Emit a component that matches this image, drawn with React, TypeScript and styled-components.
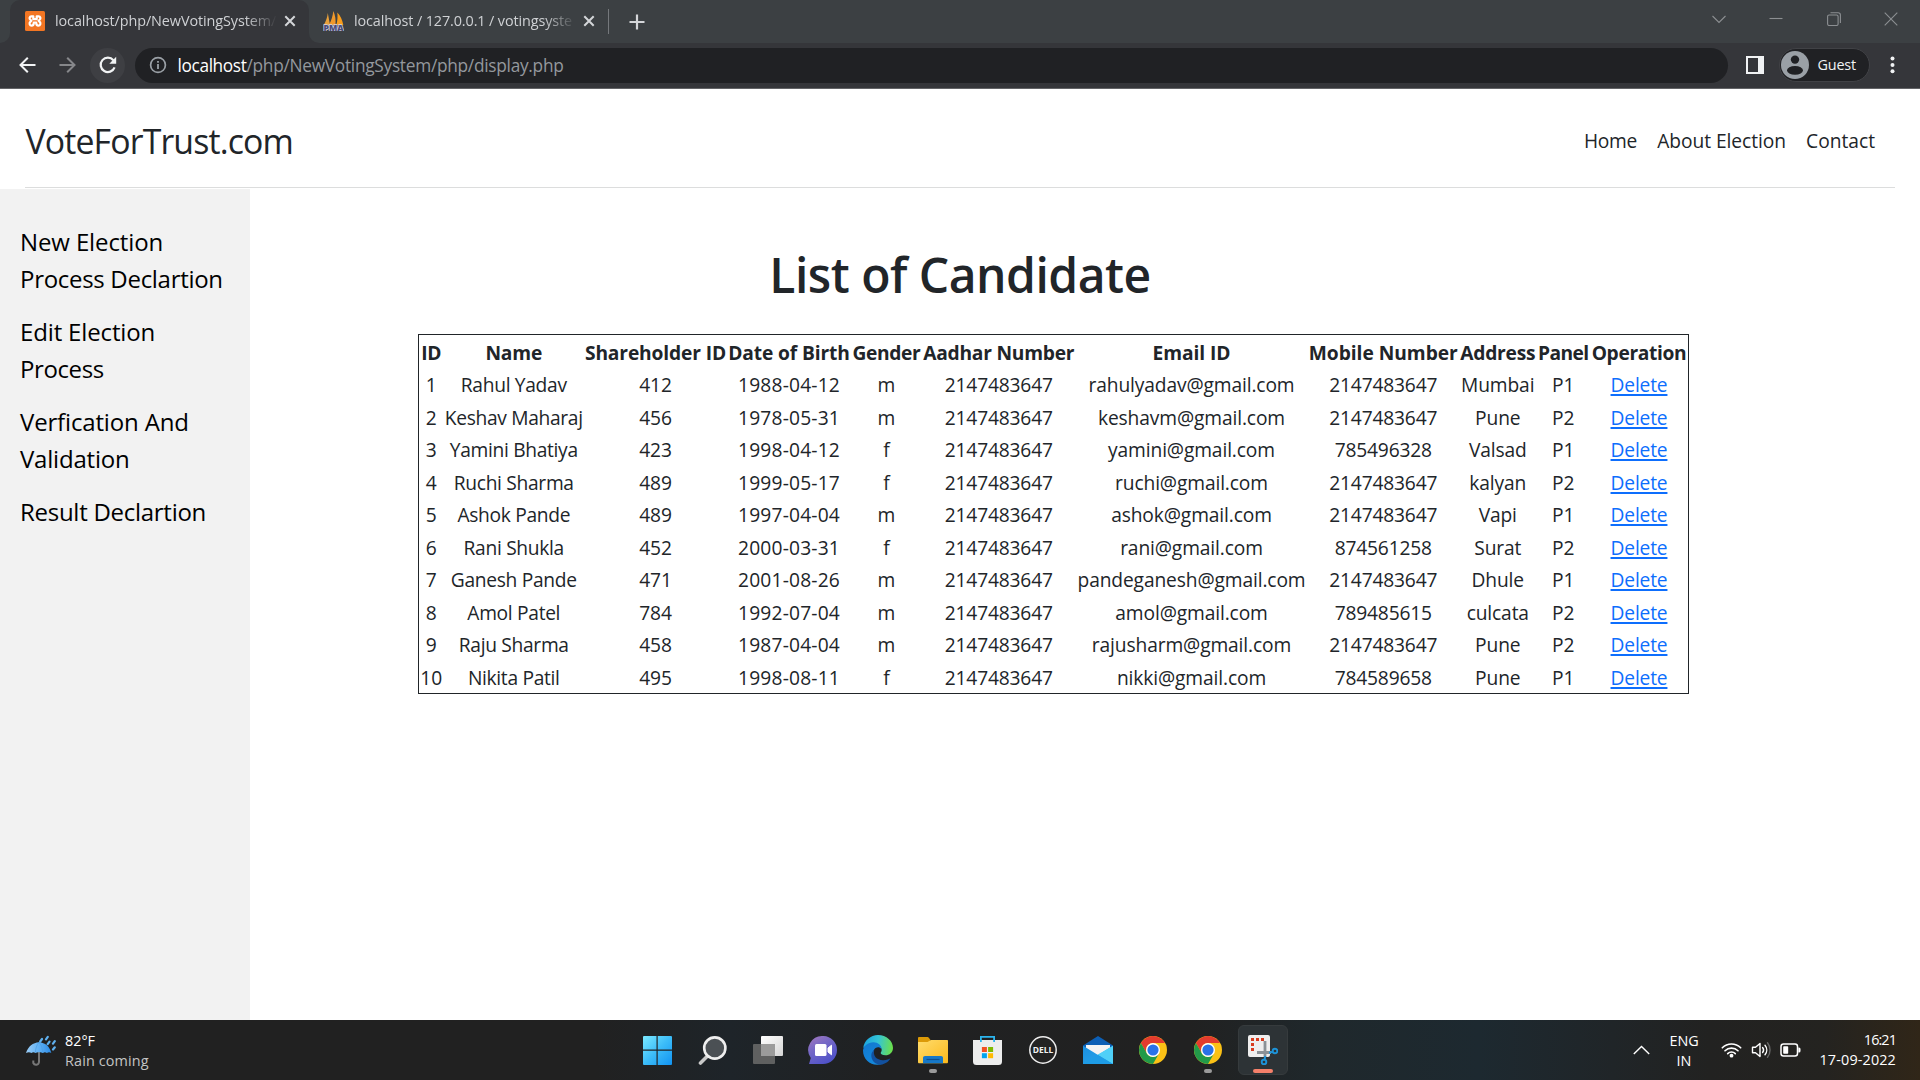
import React from 'react';
import styled, { createGlobalStyle } from 'styled-components';

const GlobalStyle = createGlobalStyle`
  * { box-sizing: border-box; }
  html, body { margin: 0; padding: 0; }
  body {
    font-family: "Open Sans", "Noto Sans", sans-serif;
    background: #fff;
    color: #212529;
    overflow: hidden;
  }
  svg { display: block; flex: none; }
`;

const Screen = styled.div`
  width: 1920px;
  height: 1080px;
  display: flex;
  flex-direction: column;
`;

/* ---------- browser chrome ---------- */

const TabStrip = styled.div`
  height: 43px;
  flex: none;
  display: flex;
  background: linear-gradient(90deg, #35363a 0 20px, #3c4043 20px);
`;

const StripEdge = styled.div`
  width: 10px;
  background: #3c4043;
  border-bottom-right-radius: 10px;
`;

const Tab = styled.div<{ $active?: boolean }>`
  width: ${p => (p.$active ? 299 : 298)}px;
  display: flex;
  align-items: center;
  padding: 0 12px 1px ${p => (p.$active ? 15 : 14)}px;
  background: ${p => (p.$active ? '#35363a' : '#3c4043')};
  border-radius: ${p => (p.$active ? '10px 10px 0 0' : '0 0 0 10px')};
`;

const TabSlot = styled.div`
  display: flex;
  background: #35363a;
`;

const ActiveSlot = styled.div`
  display: flex;
  background: #3c4043;
`;

const TabTitle = styled.div<{ $ls: number }>`
  width: 225px;
  flex: none;
  margin-left: 10px;
  font-size: 14.4px;
  line-height: 20px;
  letter-spacing: ${p => p.$ls}px;
  white-space: nowrap;
  color: #cfd1d4;
  mask-image: linear-gradient(90deg, #000 190px, transparent 222px);
`;

const TabClose = styled.div`
  margin-left: 4px;
  color: #d4d6d9;
`;

const NewTab = styled.div`
  display: flex;
  align-items: center;
  gap: 19.5px;
  padding-left: 1px;
`;

const TabDivider = styled.div`
  width: 1px;
  height: 25px;
  background: #75787c;
`;

const WindowControls = styled.div`
  margin-left: auto;
  margin-right: 22px;
  display: flex;
  align-items: center;
  gap: 43.3px;
  padding-bottom: 6px;
  color: #8c8f92;
`;

const Toolbar = styled.div`
  height: 46px;
  flex: none;
  display: flex;
  align-items: center;
  padding: 0 17px 1px 10px;
  background: #35363a;
  border-bottom: 1px solid #636467;
`;

const NavButton = styled.div<{ $filled?: boolean; $dim?: boolean }>`
  width: 35px;
  height: 35px;
  margin-right: 5px;
  border-radius: 50%;
  display: flex;
  align-items: center;
  justify-content: center;
  background: ${p => (p.$filled ? '#3e3f43' : 'transparent')};
  color: ${p => (p.$dim ? '#86878a' : '#f1f3f4')};
`;

const AddressBar = styled.div`
  width: 1593px;
  height: 35px;
  margin-left: 5px;
  border-radius: 18px;
  background: #202124;
  display: flex;
  align-items: center;
  padding-left: 13.5px;
  font-size: 17.28px;
  line-height: 35px;
  white-space: nowrap;
  color: #9aa0a6;
`;

const Host = styled.span`
  margin-left: 11px;
  color: #fff;
  letter-spacing: -0.37px;
`;

const UrlPath = styled.span`
  color: #94989d;
  letter-spacing: -0.27px;
`;

const PanelButton = styled.div`
  width: 18px;
  height: 18px;
  margin-left: 18px;
  border: 2px solid #f1f3f4;
  border-right-width: 6px;
`;

const Profile = styled.div`
  width: 91px;
  height: 34px;
  margin-left: 14.5px;
  border-radius: 17px;
  border: 1px solid #414246;
  background: #202124;
  display: flex;
  align-items: center;
  gap: 9px;
  padding-left: 1px;
  font-size: 14.4px;
  letter-spacing: -0.17px;
  color: #f1f3f4;
`;

const ProfileName = styled.span`
  line-height: 20px;
  padding-bottom: 1px;
`;

const Menu = styled.div`
  margin-left: auto;
  padding-right: 8px;
`;

/* ---------- page ---------- */

const PageHeader = styled.header`
  height: 99px;
  flex: none;
  margin: 0 25px 1px;
  padding: 5px 20px 0 0;
  border-bottom: 1px solid #dcdddd;
  display: flex;
  align-items: center;
  justify-content: space-between;
`;

const Brand = styled.div`
  padding-left: 0.5px;
  font-size: 33.8px;
  line-height: 44px;
  letter-spacing: -0.85px;
`;

const NavLinks = styled.nav`
  display: flex;
  gap: 20px;
  font-size: 19.2px;
  line-height: 30px;
`;

const NavLink = styled.a<{ $ls: number }>`
  letter-spacing: ${p => p.$ls}px;
`;

const Body = styled.div`
  flex: 1;
  min-height: 0;
  display: flex;
`;

const Sidebar = styled.aside`
  width: 250px;
  flex: none;
  background: #f2f2f2;
  padding: 34px 20px;
  display: flex;
  flex-direction: column;
  gap: 16px;
`;

const SideLink = styled.a`
  font-size: 24px;
  line-height: 37px;
  color: #000;
`;

const SideLine = styled.span<{ $ls: number }>`
  display: block;
  white-space: nowrap;
  letter-spacing: ${p => p.$ls}px;
`;

const Main = styled.main`
  flex: 1;
  padding: 56px 231px 0 168px;
`;

const Heading = styled.h1`
  margin: 0 0 29px;
  padding-right: 187px;
  text-align: center;
  font-size: 48px;
  line-height: 60px;
  font-weight: 600;
  letter-spacing: -0.5px;
`;

const Table = styled.table`
  display: block;
  width: 1271px;
  border: 1px solid #212529;
`;

const Section = styled.tbody`
  display: block;
`;

const HeadSection = styled.thead`
  display: block;
`;

const HeadCell = styled.th<{ $ls: number }>`
  padding: 2px 0 0;
  font-weight: 700;
  letter-spacing: ${p => p.$ls}px;
`;

const Cell = styled.td<{ $ls: number }>`
  padding: 1.4px 0 0;
  letter-spacing: ${p => p.$ls}px;
`;

const Row = styled.tr`
  display: grid;
  grid-template-columns: 24.5px 140.5px 143px 124px 71px 153.5px 232px 151.5px 77.5px 53.5px 98px;
  height: 32.5px;
  align-items: center;
  justify-items: center;
  font-size: 19.2px;
  line-height: 32.5px;
  white-space: nowrap;

  &:nth-child(even) ${Cell} {
    padding-top: 2px;
  }
`;

const DeleteLink = styled.a`
  color: #0d6efd;
  text-decoration: underline;
  text-decoration-thickness: 2px;
  text-underline-offset: 2px;
`;

/* ---------- taskbar ---------- */

const Taskbar = styled.footer`
  height: 60px;
  flex: none;
  display: flex;
  align-items: center;
  color: #fff;
  font-size: 14.4px;
  line-height: 20px;
  background: linear-gradient(90deg, #212121 0, #212121 31%, #1e2429 38%, #202122 46%, #212121 62%, #1f282c 69%, #1d2930 77%, #202528 84%, #222221 89%, #242320 95%, #302618 100%);
`;

const Weather = styled.div`
  width: 630px;
  padding-left: 25px;
  display: flex;
  align-items: center;
  gap: 9px;
`;

const Stack = styled.div<{ $align?: string }>`
  display: flex;
  flex-direction: column;
  padding-top: 1.5px;
  align-items: ${p => p.$align || 'flex-start'};
`;

const Line = styled.span<{ $ls?: number; $muted?: boolean }>`
  letter-spacing: ${p => p.$ls || 0}px;
  color: ${p => (p.$muted ? '#c4c4c4' : '#fff')};
`;

const Apps = styled.div`
  display: flex;
`;

const AppSlot = styled.div`
  width: 55px;
  display: flex;
  justify-content: center;
`;

const AppTile = styled.div<{ $active?: boolean }>`
  width: 50px;
  height: 50px;
  padding-top: 9px;
  border-radius: 6px;
  display: flex;
  flex-direction: column;
  align-items: center;
  gap: 4px;
  background: ${p => (p.$active ? '#2d3336' : 'transparent')};
  border: 1px solid ${p => (p.$active ? '#363b3d' : 'transparent')};
`;

const Indicator = styled.div<{ $active?: boolean }>`
  width: ${p => (p.$active ? 20 : 8)}px;
  height: 4px;
  border-radius: 2px;
  background: ${p => (p.$active ? '#f5806a' : '#9a9a9a')};
`;

const Tray = styled.div`
  margin-left: auto;
  padding-right: 24px;
  display: flex;
  align-items: center;
`;

const Language = styled.div`
  width: 30px;
  margin: 0 22px 0 18px;
`;

const Status = styled.div`
  display: flex;
  gap: 8.5px;
  align-items: center;
  margin-right: 18px;
`;

const Clock = styled.div`
  width: 77px;
  padding-bottom: 2px;
`;

/* ---------- icons ---------- */

const XamppIcon = () => (
  <svg width="20" height="20" viewBox="0 0 20 20">
    <rect width="20" height="20" rx="1.500" fill="#f37623" />
    <path d="M8.300 8.200V5.400H6.400C4.500 5.400 4 7.600 5.300 8.700l1.200 1.100-1.200 1.100c-1.500 1.500-.5 3.800 1.300 3.800 1.600 0 2.200-1.200 2.200-3.200h2.400c0 2 .6 3.200 2.200 3.200 1.800 0 2.800-2.300 1.300-3.800l-1.200-1.100 1.200-1.100c1.300-1.100.8-3.300-1.100-3.300h-1.900v2.800Z" fill="none" stroke="#fff" strokeWidth="2.200" strokeLinejoin="round" />
  </svg>
);

const PmaIcon = () => (
  <svg width="21" height="20" viewBox="0 0 21 20">
    <path d="M4.800 2 7 14H.8C3 10 4.400 6 4.800 2Z" fill="#e9a13b" />
    <path d="M10.300 0c2.200 4.500 2.500 9 2.200 14H6C8.500 9.500 9.800 4.800 10.300 0Z" fill="#f0982b" />
    <path d="M14.300 1.500c3.200 3 5 7.500 6 12.500h-7c1.200-4 1.500-8.500 1-12.500Z" fill="#f89c1c" />
    <text x="10.500" y="19.600" textAnchor="middle" textLength="20" lengthAdjust="spacingAndGlyphs" fontFamily="Open Sans, sans-serif" fontWeight="800" fontSize="8.500" fill="#4b4c78" stroke="#d5d6e4" strokeWidth="1.400" paintOrder="stroke">PMA</text>
  </svg>
);

const CloseIcon = () => (
  <svg width="12" height="12" viewBox="0 0 12 12">
    <path d="M1.300 1.300l9.400 9.400M10.700 1.300l-9.400 9.400" stroke="currentColor" strokeWidth="2" />
  </svg>
);

const PlusIcon = () => (
  <svg width="16" height="16" viewBox="0 0 16 16">
    <path d="M8 .5v15M.5 8h15" stroke="#d4d6d9" strokeWidth="2.200" />
  </svg>
);

const BackIcon = ({ flip }: { flip?: boolean }) => (
  <svg width="18" height="18" viewBox="0 0 18 18">
    <path transform={flip ? 'matrix(-1 0 0 1 17 0)' : undefined} d="M16.500 9H1.700M8.800 1.700 1.500 9l7.300 7.300" fill="none" stroke="currentColor" strokeWidth="2" />
  </svg>
);

const ReloadIcon = () => (
  <svg width="18" height="18" viewBox="0 0 18 18">
    <path d="M15.600 11.400A7.200 7.200 0 1 1 14.400 4.200" fill="none" stroke="currentColor" strokeWidth="2.200" />
    <path d="M17.200.8v6.900h-6.900Z" fill="currentColor" />
  </svg>
);

const InfoIcon = () => (
  <svg width="18" height="18" viewBox="0 0 18 18">
    <circle cx="9" cy="9" r="7.400" fill="none" stroke="#9aa0a6" strokeWidth="1.700" />
    <path d="M9 8v5M9 4.900v1.900" stroke="#9aa0a6" strokeWidth="1.800" />
  </svg>
);

const AvatarIcon = () => (
  <svg width="28" height="28" viewBox="0 0 28 28">
    <circle cx="14" cy="14" r="14" fill="#9aa0a6" />
    <circle cx="14" cy="8.600" r="4.200" fill="#202124" />
    <ellipse cx="14" cy="19.300" rx="8" ry="4.400" fill="#202124" />
  </svg>
);

const DotsIcon = () => (
  <svg width="5" height="18" viewBox="0 0 5 18">
    {[2.5, 9, 15.3].map(y => <circle key={y} cx="2.500" cy={y} r="2" fill="#f1f3f4" />)}
  </svg>
);

const WindowIcon = ({ d }: { d: string }) => (
  <svg width="14" height="14" viewBox="0 0 14 14">
    <path d={d} fill="none" stroke="currentColor" strokeWidth="1.100" />
  </svg>
);

const UmbrellaIcon = () => (
  <svg width="31" height="31" viewBox="0 0 31 31">
    <defs>
      <linearGradient id="umb" x1="0" x2="1">
        <stop offset="0" stopColor="#9ccdf5" />
        <stop offset=".5" stopColor="#62b2f5" />
        <stop offset="1" stopColor="#2b8be6" />
      </linearGradient>
    </defs>
    <path d="M14 15v12a3 3 0 0 1-5.700 1v-2.500" fill="none" stroke="#777" strokeWidth="2" />
    <path d="M1 18C3 11.500 8 7.500 14 7.200c6 .3 11 4.300 12.300 10.800-1.500-.9-3-.9-4.400 0-1.300-.9-2.700-.9-4.100 0-1.300-.9-6-.9-7.300 0-1.300-.9-2.800-.9-4.100 0-1.700-.9-3.300-.9-5.400 0Z" fill="url(#umb)" />
    <path d="M14 7.200c-2.500 3-3.500 6.500-3.600 10.600M14 7.200c2.500 3 3.500 6.500 3.800 10.600" fill="none" stroke="#4c9fe4" strokeWidth=".7" />
    <path d="m17 4-1.800 2.500M22.800 1.800 21 4.300M24.500 6.600l-1.800 2.500M29.800 6.200 28 8.700M29.800 12.300 28 14.500" stroke="#5fb0ee" strokeWidth="2.200" strokeLinecap="round" />
  </svg>
);

const WindowsIcon = () => (
  <svg width="30" height="30" viewBox="1.500 0.500 30 30">
    <defs>
      <linearGradient id="win" x1="0" y1="0" x2="1" y2="1">
        <stop offset="0" stopColor="#7be9ff" />
        <stop offset=".5" stopColor="#3cbcf8" />
        <stop offset="1" stopColor="#1193f2" />
      </linearGradient>
    </defs>
    <path d="M2.500 1.500h12.500V15H1.500V2.500a1 1 0 0 1 1-1ZM16.200 1.500h13.300a1 1 0 0 1 1 1V15H16.200ZM1.500 16.200H15v14.300H2.500a1 1 0 0 1-1-1ZM16.200 16.200h14.300v13.300a1 1 0 0 1-1 1H16.200Z" fill="url(#win)" />
  </svg>
);

const SearchIcon = () => (
  <svg width="30" height="30" viewBox="0 0 30 30">
    <path d="m9 21.500-6.500 6.500" stroke="#c9c9c9" strokeWidth="3.600" strokeLinecap="round" />
    <circle cx="16.800" cy="13" r="10.600" fill="#4b5054" stroke="#efefef" strokeWidth="2.600" />
  </svg>
);

const TaskViewIcon = () => (
  <svg width="30" height="30" viewBox="0 0 30 30">
    <defs>
      <linearGradient id="tv" x1="0" y1="0" x2="1" y2="1">
        <stop offset="0" stopColor="#fff" />
        <stop offset="1" stopColor="#d5d5d5" />
      </linearGradient>
    </defs>
    <rect x="8" y="1" width="22" height="20" rx="1" fill="url(#tv)" />
    <rect x="0" y="9" width="22" height="20" rx="1" fill="#5f6060" />
    <path d="M8 9h14v12H8Z" fill="#9b9b9b" />
  </svg>
);

const ChatIcon = () => (
  <svg width="30" height="30" viewBox="0 0 30 30">
    <defs>
      <linearGradient id="chat" x1="0" y1="0" x2=".6" y2="1">
        <stop offset="0" stopColor="#a578bd" />
        <stop offset=".45" stopColor="#7568c6" />
        <stop offset="1" stopColor="#4f52c9" />
      </linearGradient>
    </defs>
    <path d="M15.500 1A14 14 0 0 1 29 15a14 14 0 0 1-14 14H1l1.800-6A14 14 0 0 1 15.500 1Z" fill="url(#chat)" />
    <rect x="7" y="9" width="11.500" height="12" rx="1.500" fill="#fff" />
    <path d="m20 13 3.500-2.800v9.600L20 17Z" fill="#fff" stroke="#fff" strokeLinejoin="round" />
  </svg>
);

const EdgeIcon = () => (
  <svg width="30" height="30" viewBox="0 0 30 30">
    <defs>
      <linearGradient id="e1" x1="0" y1=".3" x2="1" y2=".4">
        <stop offset="0" stopColor="#1aa3e0" />
        <stop offset=".5" stopColor="#35c4d5" />
        <stop offset="1" stopColor="#6be04b" />
      </linearGradient>
      <linearGradient id="e2" x1="0" y1="0" x2=".5" y2="1">
        <stop offset="0" stopColor="#1278cf" />
        <stop offset="1" stopColor="#1488dc" />
      </linearGradient>
    </defs>
    <path d="M.2 13C1.200 5.500 7.500 0 15 0c8.500 0 15 6 15 13 0 4.500-3.500 7.300-7.500 7.300-3.300 0-4.800-1-4.800-2.200 0-.8 1-1.300 1-3.300 0-3-3-5.800-7.200-5.800C6.500 9 2.300 11 .2 13Z" fill="url(#e1)" />
    <path d="M0 15.500C.3 11 5 7.200 10.500 7.200c4.500 0 8 3 8.200 7.300-1-1.800-2.400-2.300-3.700-2.300-2.800 0-4.800 2.800-4.800 6.300 0 6 4.800 9.800 9.300 10.200C10 32.300 0 26 0 15.500Z" fill="url(#e2)" />
    <path d="M11.300 14.800c-2 6 2.700 10.700 9.200 10.400 3 0 5.500-1 6.900-1.900-.7 2.200-4.900 6-9.900 6.500C12 29.500 8 25 8.300 20c.2-2.200 1.500-4.200 3-5.200Z" fill="#12519f" />
  </svg>
);

const FolderIcon = () => (
  <svg width="30" height="30" viewBox="0 0 30 30">
    <defs>
      <linearGradient id="fold" x1="0" y1="0" x2="1" y2="1">
        <stop offset="0" stopColor="#ffdc6c" />
        <stop offset="1" stopColor="#fbb91c" />
      </linearGradient>
    </defs>
    <path d="M0 3.200C0 2.400.5 2 1.200 2H9c1 0 1.500.3 2 1l1.500 2V9H0Z" fill="#dc9a07" />
    <path d="M0 7h9.500L13 5h16c.6 0 1 .4 1 1v21c0 .8-.5 1.300-1.300 1.300H1.300C.5 28.300 0 27.800 0 27Z" fill="url(#fold)" />
    <path d="M5 28.300V23c0-1.300.8-2 2-2h16c1.200 0 2 .7 2 2v5.300Z" fill="#1678c8" />
    <path d="M8.500 24.500h13" stroke="#0b4f92" strokeWidth="1.200" />
  </svg>
);

const StoreIcon = () => (
  <svg width="30" height="30" viewBox="0.500 0 30 30">
    <path d="M.5 5h29v21.500A3.500 3.500 0 0 1 26 30H4a3.500 3.500 0 0 1-3.500-3.500Z" fill="#ededed" />
    <path d="M8.400 7V1.800h13.200V7" fill="none" stroke="#2bb5ee" strokeWidth="1.800" />
    <path d="M9.400 12h5v5h-5Z" fill="#f25022" />
    <path d="M15.600 12h5v5h-5Z" fill="#7fba00" />
    <path d="M9.400 18.200h5v5h-5Z" fill="#00a4ef" />
    <path d="M15.600 18.200h5v5h-5Z" fill="#ffb900" />
  </svg>
);

const DellIcon = () => (
  <svg width="30" height="30" viewBox="0 0 30 30">
    <circle cx="15" cy="15" r="13.200" fill="#232323" stroke="#ededed" strokeWidth="1.500" />
    <text x="15" y="18.300" textAnchor="middle" textLength="20.500" lengthAdjust="spacingAndGlyphs" fontFamily="Open Sans, sans-serif" fontWeight="700" fontSize="9" fill="#f2f2f2">DELL</text>
  </svg>
);

const MailIcon = () => (
  <svg width="30" height="30" viewBox="0 0 30 30">
    <defs>
      <linearGradient id="mail" x1="0" y1="0" x2="1" y2="1">
        <stop offset="0" stopColor="#1b8fe0" />
        <stop offset="1" stopColor="#28a8ec" />
      </linearGradient>
    </defs>
    <path d="M0 10.500 15 1l15 9.500V16H0Z" fill="#0c5fb5" />
    <path d="M3 10h24v6L15 22 3 16Z" fill="#f3f3f3" />
    <path d="M0 10.800 15 20 30 10.800V29H0Z" fill="url(#mail)" />
    <path d="M30 10.800V29L14.500 19.700Z" fill="#4fd0f8" />
    <path d="M0 29 14.500 19.700 30 29Z" fill="#1e9ce6" />
  </svg>
);

const ChromeIcon = () => (
  <svg width="30" height="30" viewBox="0 0 30 30">
    <circle cx="15" cy="15" r="14" fill="#fbc116" />
    <path d="M2.880 8A14 14 0 0 1 27.120 8H15a7 7 0 0 0-6.060 10.500Z" fill="#e33b2e" />
    <path d="M2.880 8A14 14 0 0 0 15 29l6.060-10.500A7 7 0 0 1 8.940 18.500Z" fill="#229a49" />
    <circle cx="15" cy="15" r="7" fill="#fff" />
    <circle cx="15" cy="15" r="5.600" fill="#2a72e8" />
  </svg>
);

const SnipIcon = () => (
  <svg width="30" height="30" viewBox="0 0 30 30">
    <rect x="0" y="0" width="22" height="22" rx="2" fill="#eeeeee" />
    <path d="M4.500 16V4.500H16" fill="none" stroke="#d83b1e" strokeWidth="3" strokeDasharray="3 2" />
    <path d="M17 6v16M9 17.500h14" stroke="#8b9196" strokeWidth="2.800" />
    <circle cx="27" cy="16" r="2.300" fill="none" stroke="#1d93d8" strokeWidth="1.900" />
    <circle cx="16" cy="27" r="2.300" fill="none" stroke="#1d93d8" strokeWidth="1.900" />
    <path d="m21 17.800 4-1M17.200 21l-.6 4" stroke="#1d93d8" strokeWidth="2" />
  </svg>
);

const ChevronUpIcon = () => (
  <svg width="18" height="12" viewBox="0.500 0 18 12">
    <path d="m1.300 10 7.700-7.600 7.700 7.600" fill="none" stroke="#fff" strokeWidth="1.400" />
  </svg>
);

const WifiIcon = () => (
  <svg width="21" height="16" viewBox="0 0 21 16">
    <g fill="none" stroke="#fff" strokeWidth="1.600" strokeLinecap="round">
      <path d="M1.300 5.800a13 13 0 0 1 18.400 0" />
      <path d="M4 8.800a9.200 9.200 0 0 1 13 0" />
      <path d="M6.700 11.600a5.400 5.400 0 0 1 7.600 0" />
    </g>
    <circle cx="10.500" cy="13.700" r="1.900" fill="#fff" />
  </svg>
);

const VolumeIcon = () => (
  <svg width="21" height="18" viewBox="0 0 21 18">
    <g fill="none" stroke="#fff" strokeWidth="1.400" strokeLinejoin="round" strokeLinecap="round">
      <path d="M1.500 6.300h3L9 2.500v13l-4.500-3.800h-3Z" />
      <path d="M11.600 6.500a4 4 0 0 1 0 5M14 4.200a7.500 7.500 0 0 1 0 9.600" />
      <path d="M16.500 1.800a11.500 11.500 0 0 1 0 14.400" stroke="#666" />
    </g>
  </svg>
);

const BatteryIcon = () => (
  <svg width="21" height="14" viewBox="0 0 21 14">
    <rect x="1" y="1" width="16.500" height="12" rx="2.500" fill="none" stroke="#fff" strokeWidth="1.500" />
    <rect x="3.200" y="3.200" width="5" height="7.600" rx=".8" fill="#fff" />
    <path d="M18.300 4.500h.7a1.500 1.500 0 0 1 1.500 1.500v2a1.500 1.500 0 0 1-1.500 1.500h-.7Z" fill="#fff" />
  </svg>
);

/* ---------- data ---------- */

/* label, header letter spacing, cell letter spacing */
const columns: [string, number, number][] = [
  ['ID', -0.2, 0],
  ['Name', -0.2, -0.31],
  ['Shareholder ID', -0.13, -0.17],
  ['Date of Birth', -0.13, 0.19],
  ['Gender', -0.34, 0],
  ['Aadhar Number', -0.24, -0.17],
  ['Email ID', -0.05, -0.12],
  ['Mobile Number', -0.03, -0.17],
  ['Address', -0.23, -0.13],
  ['Panel', -0.62, -0.1],
  ['Operation', -0.34, -0.17],
];

const candidates = [
  ['1', 'Rahul Yadav', '412', '1988-04-12', 'm', '2147483647', 'rahulyadav@gmail.com', '2147483647', 'Mumbai', 'P1'],
  ['2', 'Keshav Maharaj', '456', '1978-05-31', 'm', '2147483647', 'keshavm@gmail.com', '2147483647', 'Pune', 'P2'],
  ['3', 'Yamini Bhatiya', '423', '1998-04-12', 'f', '2147483647', 'yamini@gmail.com', '785496328', 'Valsad', 'P1'],
  ['4', 'Ruchi Sharma', '489', '1999-05-17', 'f', '2147483647', 'ruchi@gmail.com', '2147483647', 'kalyan', 'P2'],
  ['5', 'Ashok Pande', '489', '1997-04-04', 'm', '2147483647', 'ashok@gmail.com', '2147483647', 'Vapi', 'P1'],
  ['6', 'Rani Shukla', '452', '2000-03-31', 'f', '2147483647', 'rani@gmail.com', '874561258', 'Surat', 'P2'],
  ['7', 'Ganesh Pande', '471', '2001-08-26', 'm', '2147483647', 'pandeganesh@gmail.com', '2147483647', 'Dhule', 'P1'],
  ['8', 'Amol Patel', '784', '1992-07-04', 'm', '2147483647', 'amol@gmail.com', '789485615', 'culcata', 'P2'],
  ['9', 'Raju Sharma', '458', '1987-04-04', 'm', '2147483647', 'rajusharm@gmail.com', '2147483647', 'Pune', 'P2'],
  ['10', 'Nikita Patil', '495', '1998-08-11', 'f', '2147483647', 'nikki@gmail.com', '784589658', 'Pune', 'P1'],
];

const sideLinks: [string, number][][] = [
  [['New Election', -0.12], ['Process Declartion', -0.3]],
  [['Edit Election', -0.15], ['Process', -0.4]],
  [['Verfication And', -0.16], ['Validation', -0.2]],
  [['Result Declartion', -0.27]],
];

const apps: { id: string; Icon: () => React.JSX.Element; open?: boolean; active?: boolean }[] = [
  { id: 'start', Icon: WindowsIcon },
  { id: 'search', Icon: SearchIcon },
  { id: 'taskview', Icon: TaskViewIcon },
  { id: 'chat', Icon: ChatIcon },
  { id: 'edge', Icon: EdgeIcon },
  { id: 'explorer', Icon: FolderIcon, open: true },
  { id: 'store', Icon: StoreIcon },
  { id: 'dell', Icon: DellIcon },
  { id: 'mail', Icon: MailIcon },
  { id: 'chrome', Icon: ChromeIcon },
  { id: 'chrome-guest', Icon: ChromeIcon, open: true },
  { id: 'snip', Icon: SnipIcon, open: true, active: true },
];

export default function App() {
  return (
    <Screen>
      <GlobalStyle />
      <TabStrip>
        <StripEdge />
        <ActiveSlot>
          <Tab $active>
            <XamppIcon />
            <TabTitle $ls={-0.085}>localhost/php/NewVotingSystem/</TabTitle>
            <TabClose><CloseIcon /></TabClose>
          </Tab>
        </ActiveSlot>
        <TabSlot>
          <Tab>
            <PmaIcon />
            <TabTitle $ls={-0.11}>localhost / 127.0.0.1 / votingsyste</TabTitle>
            <TabClose><CloseIcon /></TabClose>
          </Tab>
        </TabSlot>
        <NewTab>
          <TabDivider />
          <PlusIcon />
        </NewTab>
        <WindowControls>
          <WindowIcon d="M.5 4 7 10.500 13.500 4" />
          <WindowIcon d="M.5 6.500h13" />
          <WindowIcon d="M.6 4.500a1.500 1.500 0 0 1 1.500-1.500h7.500a1.500 1.500 0 0 1 1.500 1.500v7.500a1.500 1.500 0 0 1-1.500 1.500H2.100A1.500 1.500 0 0 1 .6 12ZM3.500.7h7.600a2.300 2.300 0 0 1 2.300 2.300v8" />
          <WindowIcon d="M.7.7l12.600 12.600M13.300.7.7 13.300" />
        </WindowControls>
      </TabStrip>

      <Toolbar>
        <NavButton><BackIcon /></NavButton>
        <NavButton $dim><BackIcon flip /></NavButton>
        <NavButton $filled><ReloadIcon /></NavButton>
        <AddressBar>
          <InfoIcon />
          <Host>localhost</Host>
          <UrlPath>/php/NewVotingSystem/php/display.php</UrlPath>
        </AddressBar>
        <PanelButton />
        <Profile>
          <AvatarIcon />
          <ProfileName>Guest</ProfileName>
        </Profile>
        <Menu><DotsIcon /></Menu>
      </Toolbar>

      <PageHeader>
        <Brand>VoteForTrust.com</Brand>
        <NavLinks>
          <NavLink $ls={-0.25}>Home</NavLink>
          <NavLink $ls={-0.04}>About Election</NavLink>
          <NavLink $ls={0}>Contact</NavLink>
        </NavLinks>
      </PageHeader>

      <Body>
        <Sidebar>
          {sideLinks.map(lines => (
            <SideLink key={lines[0][0]}>
              {lines.map(([text, ls]) => <SideLine key={text} $ls={ls}>{text}</SideLine>)}
            </SideLink>
          ))}
        </Sidebar>
        <Main>
          <Heading>List of Candidate</Heading>
          <Table>
            <HeadSection>
              <Row>
                {columns.map(([label, ls]) => <HeadCell key={label} $ls={ls}>{label}</HeadCell>)}
              </Row>
            </HeadSection>
            <Section>
              {candidates.map(row => (
                <Row key={row[0]}>
                  {row.map((value, i) => <Cell key={i} $ls={columns[i][2]}>{value}</Cell>)}
                  <Cell $ls={columns[10][2]}><DeleteLink>Delete</DeleteLink></Cell>
                </Row>
              ))}
            </Section>
          </Table>
        </Main>
      </Body>

      <Taskbar>
        <Weather>
          <UmbrellaIcon />
          <Stack>
            <Line>82°F</Line>
            <Line $ls={0.14} $muted>Rain coming</Line>
          </Stack>
        </Weather>
        <Apps>
          {apps.map(({ id, Icon, open, active }) => (
            <AppSlot key={id}>
              <AppTile $active={active}>
                <Icon />
                {open && <Indicator $active={active} />}
              </AppTile>
            </AppSlot>
          ))}
        </Apps>
        <Tray>
          <ChevronUpIcon />
          <Language>
            <Stack $align="center">
              <Line $ls={-0.1}>ENG</Line>
              <Line>IN</Line>
            </Stack>
          </Language>
          <Status>
            <WifiIcon />
            <VolumeIcon />
            <BatteryIcon />
          </Status>
          <Clock>
            <Stack $align="flex-end">
              <Line $ls={-0.9}>16:21</Line>
              <Line $ls={0.14}>17-09-2022</Line>
            </Stack>
          </Clock>
        </Tray>
      </Taskbar>
    </Screen>
  );
}
